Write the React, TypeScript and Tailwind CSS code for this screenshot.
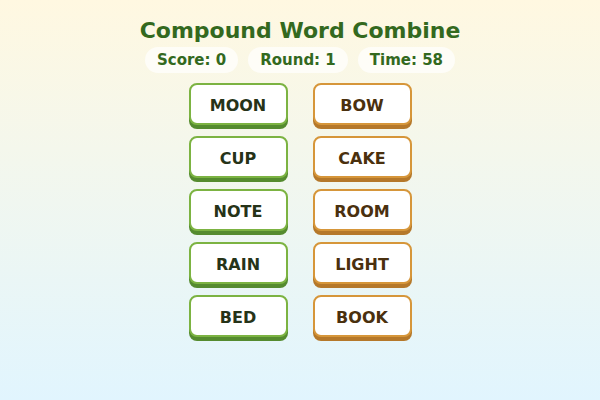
import React from "react";

const left = ["MOON", "CUP", "NOTE", "RAIN", "BED"];
const right = ["BOW", "CAKE", "ROOM", "LIGHT", "BOOK"];

function Tile({ word, tone }: { word: string; tone: "green" | "orange" }) {
  const cls =
    tone === "green"
      ? "border-[#7cb342] shadow-[0_4px_0_#558b2f] text-[#263318]"
      : "border-[#d6963a] shadow-[0_4px_0_#b5782a] text-[#4a300e]";
  return (
    <button
      className={`w-[99px] h-[42px] pt-[3px] rounded-[8px] border-2 bg-white text-[16px] font-bold flex items-center justify-center ${cls}`}
    >
      {word}
    </button>
  );
}

export default function App() {
  return (
    <div
      className="w-[600px] h-[400px] bg-gradient-to-b from-[#fff8e1] to-[#e1f5fe] flex flex-col items-center"
      style={{ fontFamily: '"DejaVu Sans", sans-serif' }}
    >
      <h1 className="mt-[17px] text-[22px] font-bold text-[#33691e] leading-[28px]">
        Compound Word Combine
      </h1>
      <div className="mt-[2px] flex gap-[10px] text-[15px] font-bold text-[#33691e]">
        <span className="px-[12px] h-[26px] flex items-center rounded-full bg-white/70">Score: 0</span>
        <span className="px-[12px] h-[26px] flex items-center rounded-full bg-white/70">Round: 1</span>
        <span className="px-[12px] h-[26px] flex items-center rounded-full bg-white/70">Time: 58</span>
      </div>
      <div className="mt-[10px] flex gap-[25px]">
        <div className="flex flex-col gap-[11px]">
          {left.map((w) => (
            <Tile key={w} word={w} tone="green" />
          ))}
        </div>
        <div className="flex flex-col gap-[11px]">
          {right.map((w) => (
            <Tile key={w} word={w} tone="orange" />
          ))}
        </div>
      </div>
    </div>
  );
}
